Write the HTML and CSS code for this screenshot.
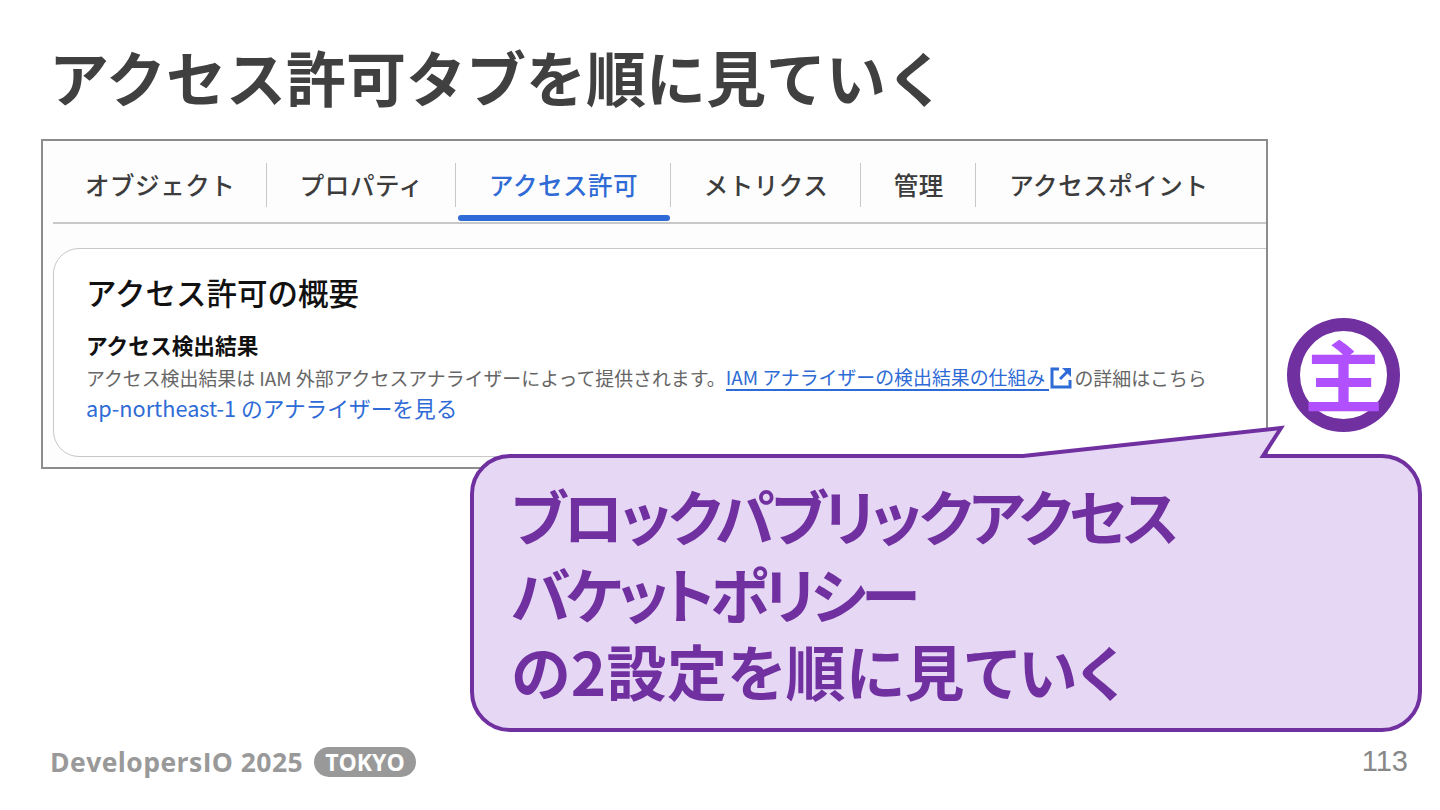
FILE: index.html
```html
<!DOCTYPE html>
<html lang="ja">
<head>
    <meta charset="UTF-8">
    <title>アクセス許可タブを順に見ていく</title>
    <link rel="stylesheet" href="styles.css">
</head>
<body>
    <div class="slide">
        <h1 class="slide-title">アクセス許可タブを順に見ていく</h1>

        <!-- Console capture -->
        <div class="console">
            <div class="tabs">
                <div class="tab">オブジェクト</div>
                <div class="tab">プロパティ</div>
                <div class="tab active">アクセス許可</div>
                <div class="tab">メトリクス</div>
                <div class="tab">管理</div>
                <div class="tab">アクセスポイント</div>
            </div>
            <div class="card">
                <h2>アクセス許可の概要</h2>
                <h3>アクセス検出結果</h3>
                <p class="desc">アクセス検出結果は IAM 外部アクセスアナライザーによって提供されます。<a class="doc-link">IAM アナライザーの検出結果の仕組み </a><svg class="ext-icon" viewBox="0 0 22 22"><path d="M9 2H2v18h18v-7" fill="none" stroke="#2f6bd6" stroke-width="3"/><path d="M10 12l8-8" fill="none" stroke="#2f6bd6" stroke-width="3"/><path d="M12 1h9v9z" fill="#2f6bd6"/></svg>の詳細はこちら</p>
                <p class="region-link">ap-northeast-1 のアナライザーを見る</p>
            </div>
        </div>

        <div class="footer">
            <div class="brand">
                <span class="brand-name">DevelopersIO 2025</span>
                <span class="brand-tag">TOKYO</span>
            </div>
            <div class="page-num">113</div>
        </div>

        <!-- Speaker badge and speech bubble lie over the capture -->
        <div class="speaker">主</div>
        <svg class="bubble-shape" viewBox="0 0 960 310">
            <path d="M40 31H553L811 3L793 31H912A38 38 0 0 1 950 69V267A38 38 0 0 1 912 305H40A38 38 0 0 1 2 267V69A38 38 0 0 1 40 31Z" fill="#e6d8f5" stroke="#7030a0" stroke-width="4"/>
        </svg>
        <div class="bubble-text">
            <div class="line-one">ブロックパブリックアクセス</div>
            <div class="line-two">バケットポリシー</div>
            <div class="line-three">の2設定を順に見ていく</div>
        </div>
    </div>
</body>
</html>
```

FILE: styles.css
```css
body {
    margin: 0;
    background: #fff;
    font-family: "Noto Sans CJK JP", "Noto Sans", sans-serif;
}

.slide {
    position: relative;
    display: flex;
    flex-direction: column;
    width: 1440px;
    height: 810px;
    overflow: hidden;
}

.slide-title {
    margin: 0;
    padding: 32px 0 0 49px;
    height: 106px;
    box-sizing: border-box;
    font-size: 60px;
    line-height: 88px;
    font-weight: 700;
    color: #404040;
    white-space: nowrap;
}

.console {
    box-sizing: border-box;
    width: 1227px;
    height: 330px;
    margin: 33px 0 0 41px;
    padding: 0 0 0 10px;
    border: 2px solid #8c8c8c;
    background: #fdfdfd;
    overflow: hidden;
}

.tabs {
    display: flex;
    height: 83px;
    padding-top: 22px;
    box-sizing: border-box;
    border-bottom: 2px solid #c8c8c8;
    align-items: flex-start;
}

.tab {
    position: relative;
    height: 44px;
    padding: 0 31.5px 0 33px;
    font-size: 24.5px;
    line-height: 44px;
    font-weight: 500;
    letter-spacing: 0.55px;
    color: #3c3c3c;
    white-space: nowrap;
    border-left: 1.5px solid #c8c8c8;
}

.tab:first-child {
    border-left: none;
    padding: 0 30.5px 0 32px;
}

.tab.active {
    color: #2f6bd6;
}

.tab.active::after {
    content: "";
    position: absolute;
    left: 2px;
    right: 0;
    top: 52px;
    height: 6px;
    border-radius: 3px;
    background: #2f6bd6;
}

.card {
    box-sizing: border-box;
    width: 1400px;
    height: 209px;
    margin-top: 24px;
    padding: 21px 32px;
    background: #fff;
    border: 1.5px solid #c8c8c8;
    border-radius: 26px;
}

.card h2 {
    margin: 0;
    font-size: 30.5px;
    line-height: 44px;
    font-weight: 500;
    color: #111;
}

.card h3 {
    margin: 15px 0 0;
    font-size: 21.7px;
    line-height: 32px;
    font-weight: 700;
    color: #111;
}

.desc {
    display: flex;
    align-items: center;
    margin: 2px 0 0;
    font-size: 18.9px;
    line-height: 30px;
    color: #666;
    white-space: pre;
}

.doc-link {
    color: #2f6bd6;
    line-height: 24px;
    border-bottom: 2px solid #2f6bd6;
    white-space: pre;
}

.ext-icon {
    width: 22px;
    height: 22px;
    margin: 0 2px 0 1px;
}

.region-link {
    margin: 0;
    font-size: 21.7px;
    line-height: 30px;
    color: #2f6bd6;
}

.footer {
    display: flex;
    justify-content: space-between;
    align-items: center;
    margin-top: auto;
    padding: 0 32px 32px 50px;
}

.brand {
    display: flex;
    align-items: center;
    gap: 11px;
}

.brand-name {
    font-family: "Open Sans", sans-serif;
    font-size: 26.5px;
    line-height: 32px;
    font-weight: 700;
    color: #999;
    letter-spacing: 0.45px;
}

.brand-tag {
    padding: 0 11px;
    height: 30px;
    border-radius: 15px;
    background: #999;
    color: #fff;
    font-family: "Open Sans", sans-serif;
    font-size: 23px;
    line-height: 30px;
    font-weight: 700;
}

.page-num {
    font-family: "Liberation Sans", sans-serif;
    font-size: 29px;
    color: #888;
}

.speaker {
    position: absolute;
    left: 1287px;
    top: 318px;
    box-sizing: border-box;
    width: 113px;
    height: 114px;
    border: 13px solid #7030a0;
    border-radius: 50%;
    background: #fff;
    color: #b050ff;
    font-size: 78px;
    line-height: 84px;
    font-weight: 700;
    text-align: center;
}

.bubble-shape {
    position: absolute;
    left: 470px;
    top: 425px;
    width: 960px;
    height: 310px;
}

.bubble-text {
    position: absolute;
    left: 511px;
    top: 476px;
    font-size: 60px;
    line-height: 77.5px;
    font-weight: 700;
    color: #7030a0;
    font-feature-settings: "palt";
    white-space: nowrap;
}

.line-one {
    letter-spacing: -3.4px;
}

.line-two {
    letter-spacing: -4.6px;
}

.line-three {
    letter-spacing: 0.5px;
}
```
